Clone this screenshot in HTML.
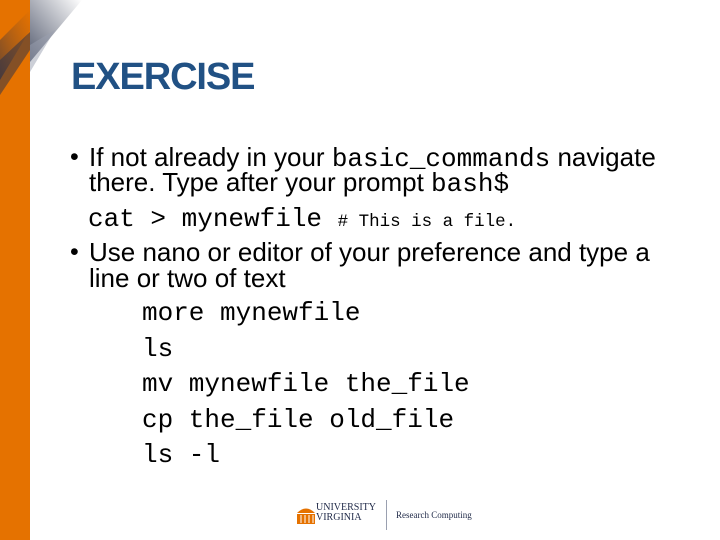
<!DOCTYPE html>
<html><head><style>
body{margin:0;width:720px;height:540px;position:relative;background:#fff;overflow:hidden;font-family:"Liberation Sans",sans-serif}
.a{position:absolute;white-space:pre}
.m{font-family:"Liberation Mono",monospace}
</style></head><body>
<div class="a" style="left:0;top:0;width:30px;height:540px;background:#e57200"></div>
<svg class="a" style="left:0;top:0" width="90" height="110">
<defs><linearGradient id="g" x1="0" y1="1" x2="1" y2="0"><stop offset="0" stop-color="#1d2640"/><stop offset="1" stop-color="#ffffff"/></linearGradient>
<linearGradient id="h" x1="0" y1="1" x2="1" y2="0"><stop offset="0" stop-color="#232d4b" stop-opacity=".9"/><stop offset="1" stop-color="#e57200" stop-opacity=".6"/></linearGradient></defs>
<polygon points="30,0 82,0 30,62" fill="url(#g)" opacity=".75"/>
<polygon points="0,40 30,10 30,30 0,80" fill="url(#h)" opacity=".7"/>
<polygon points="30,45 55,30 30,72" fill="#9aa0b0" opacity=".5"/>
<polygon points="0,60 30,32 30,50 0,95" fill="#232d4b" opacity=".5"/>
</svg>
<div class="a" style="left:71px;top:56px;font-size:38px;font-weight:bold;color:#215184;letter-spacing:-1.1px">EXERCISE</div>
<div class="a" style="left:70px;top:146px;font-size:25px;line-height:23px;color:#000">•</div>
<div class="a" style="left:89px;top:146px;font-size:26px;line-height:23px;color:#000">If not already in your <span class="m" style="font-size:26px">basic_commands</span> navigate
there. Type after your prompt <span class="m" style="font-size:26px">bash$</span></div>
<div class="a m" style="left:88px;top:204px;font-size:26px;color:#000">cat &gt; mynewfile <span style="font-size:17.5px"># This is a file.</span></div>
<div class="a" style="left:70px;top:239px;font-size:25px;line-height:26px;color:#000">•</div>
<div class="a" style="left:89px;top:239px;font-size:26px;line-height:26px;color:#000">Use nano or editor of your preference and type a
line or two of text</div>
<div class="a m" style="left:142px;top:296px;font-size:26px;line-height:35.5px;color:#000">more mynewfile
ls
mv mynewfile the_file
cp the_file old_file
ls -l</div>
<svg class="a" style="left:296px;top:505px" width="20" height="20"><path d="M1 8 Q10 -1 19 8Z" fill="#e57200"/><rect x="1" y="9" width="18" height="10" fill="#e57200"/><g stroke="#fff" stroke-width="1"><line x1="5" y1="10" x2="5" y2="18"/><line x1="9" y1="10" x2="9" y2="18"/><line x1="13" y1="10" x2="13" y2="18"/><line x1="17" y1="10" x2="17" y2="18"/></g></svg>
<div class="a" style="left:316px;top:503px;font-family:'Liberation Serif',serif;font-size:10px;line-height:10px;color:#232d4b">UNIVERSITY<br>VIRGINIA</div>
<div class="a" style="left:386px;top:500px;width:1px;height:30px;background:#9aa0b0"></div>
<div class="a" style="left:396px;top:510px;font-family:'Liberation Serif',serif;font-size:9px;color:#232d4b">Research Computing</div>
</body></html>
